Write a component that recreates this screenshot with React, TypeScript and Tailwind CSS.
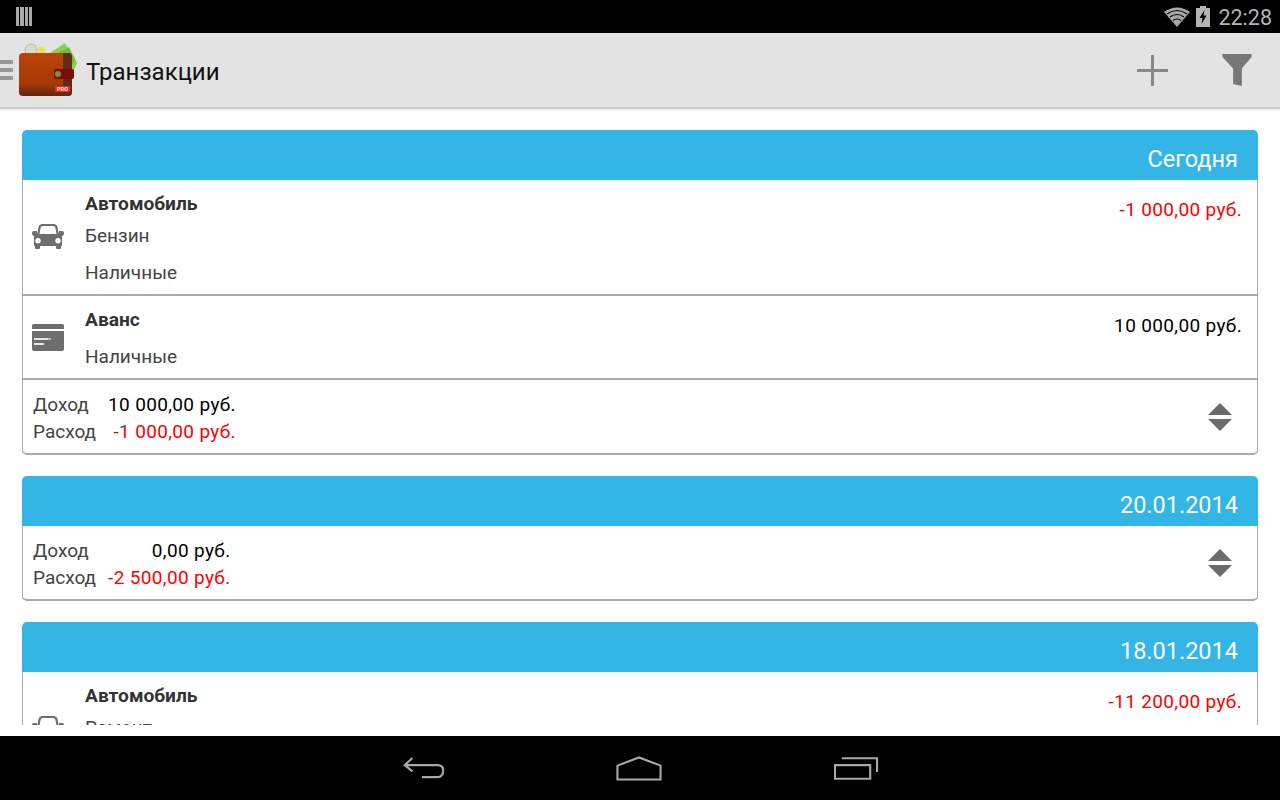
function CarIcon() {
  return (
    <svg width="32" height="26" viewBox="0 0 32 26" className="block">
      <path d="M6 12 L7.500 3.500 Q8 1 11 1 H21 Q24 1 24.500 3.500 L26 12" fill="none" stroke="#6e6e6e" strokeWidth="2.200" />
      <path d="M0 9 Q0 7 2 7 H5 V12 H2 Q0 12 0 9 Z M32 9 Q32 7 30 7 H27 V12 H30 Q32 12 32 9 Z" fill="#6e6e6e" />
      <path fillRule="evenodd" d="M5 10 H27 Q30 10 30 13 V21 Q30 22 29 22 V24 Q29 25 28 25 H25 Q24 25 24 24 V22 H8 V24 Q8 25 7 25 H4 Q3 25 3 24 V22 Q2 22 2 21 V13 Q2 10 5 10 Z M6 14 A2.700 2.700 0 1 0 6.010 19.400 A2.700 2.700 0 1 0 6 14 Z M26 14 A2.700 2.700 0 1 0 26.010 19.400 A2.700 2.700 0 1 0 26 14 Z" fill="#6e6e6e" />
    </svg>
  )
}

function CardIcon() {
  return (
    <svg width="32" height="27" viewBox="0 0 32 27" className="block">
      <path d="M2 0 H30 Q32 0 32 2 V5 H0 V2 Q0 0 2 0 Z" fill="#6e6e6e" />
      <path d="M0 7 H32 V25 Q32 27 30 27 H2 Q0 27 0 25 Z" fill="#6e6e6e" />
      <rect x="2" y="14" width="14" height="2" fill="#e4e4e4" />
      <rect x="16" y="14" width="3" height="2" fill="#bbbbbb" />
      <rect x="2" y="19" width="10" height="2" fill="#e4e4e4" />
    </svg>
  )
}

function UpDownIcon() {
  return (
    <svg width="24" height="28" viewBox="0 0 24 28" className="block">
      <path d="M12 0 L24 12 H0 Z" fill="#6b6b6b" />
      <path d="M0 16 H24 L12 28 Z" fill="#6b6b6b" />
    </svg>
  )
}

function WalletLogo() {
  return (
    <svg width="58" height="54" viewBox="0 0 58 54" className="block">
      <defs>
        <linearGradient id="walletBody" x1="0" y1="0" x2="0" y2="1">
          <stop offset="0" stopColor="#b8440a" />
          <stop offset="0.7" stopColor="#a83a06" />
          <stop offset="1" stopColor="#642610" />
        </linearGradient>
      </defs>
      <path d="M28 12 L46 0 L58 20 L54 30 Z" fill="#8fd14f" />
      <path d="M34 12 L50 4 L57 18 L50 24 Z" fill="#6fbf3a" />
      <circle cx="12" cy="7" r="6" fill="#d8dcc8" stroke="#b8bca8" />
      <circle cx="22" cy="8" r="4.500" fill="#e8e060" />
      <rect x="0" y="10" width="53" height="43" rx="4" fill="url(#walletBody)" />
      <path d="M44 10 H49 Q53 10 53 14 V49 Q53 53 49 53 H44 Z" fill="#5f2c12" />
      <rect x="35" y="26" width="20" height="10" rx="2" fill="#7a0d0a" />
      <circle cx="39" cy="31" r="3" fill="#8c8f3a" />
      <rect x="36" y="43" width="15" height="6" rx="1" fill="#f5202c" />
      <text x="43.500" y="48" fontSize="5.500" fontWeight="700" textAnchor="middle" fill="#ffffff" fontFamily="Roboto, sans-serif">PRO</text>
    </svg>
  )
}

function Row({ title, sub, amount, red, icon }: { title: string; sub?: string; amount: string; red?: boolean; icon: React.ReactNode }) {
  return (
    <div className="flex items-center border-b-2 border-[#aaaaaa]">
      <div className="w-[62px] pl-[9px] shrink-0">{icon}</div>
      <div className="flex-1 pt-3 pb-[9px] text-[19px] leading-[24px] text-[#444444]">
        <div className="font-bold text-[#333333] text-[19.2px]">{title}</div>
        {sub && <div className="mt-2">{sub}</div>}
        <div className="mt-[13px]">Наличные</div>
      </div>
      <div className={`self-start mt-[18px] pr-[15px] text-[19px] tracking-[0.35px] leading-[24px] ${red ? 'text-[#ff0000]' : 'text-black'}`}>{amount}</div>
    </div>
  )
}

function Summary({ income, expense }: { income: string; expense: string }) {
  return (
    <div className="h-[73px] flex items-center justify-between pl-[10px] pr-[25px]">
      <div className="grid grid-cols-[auto_auto] gap-x-3 text-[19px] leading-[27px] w-fit pt-[2px]">
        <span className="text-[#444444]">Доход</span>
        <span className="text-right text-black tracking-[0.35px]">{income}</span>
        <span className="text-[#444444]">Расход</span>
        <span className="text-right text-[#ff0000] tracking-[0.35px]">{expense}</span>
      </div>
      <UpDownIcon />
    </div>
  )
}

function DayCard({ date, children }: { date: string; children: React.ReactNode }) {
  return (
    <div className="mb-[21px]">
      <div className="h-[50px] bg-[#33b5e5] rounded-t-[5px] flex items-center justify-end pt-[10px] pr-5 text-[23.5px] text-white">{date}</div>
      <div className="border-x-[1.5px] border-b-2 border-[#aaaaaa] rounded-b-[5px] bg-white">{children}</div>
    </div>
  )
}

export default function App() {
  return (
    <div className="w-[1280px] h-[800px] flex flex-col overflow-hidden bg-white font-['Roboto',sans-serif]">

      {/* status bar */}
      <div className="h-[33px] bg-black flex items-center justify-between pl-4 pr-2 shrink-0">
        <div className="flex gap-[1px] w-4 h-[19px]">
          {[1,2,3,4].map(i => <div key={i} className="flex-1 bg-[#a8a8a8]" />)}
        </div>
        <div className="flex items-center">
          <svg width="26" height="20" viewBox="0 0 26 20">
            <path d="M13 20 L0 5 Q13 -4 26 5 Z" fill="#a8a8a8" />
            <path d="M3 7 Q13 0 23 7 M6 10 Q13 5 20 10 M9 13.500 Q13 10.500 17 13.500" fill="none" stroke="#000" strokeWidth="1.200" />
          </svg>
          <svg width="14" height="21" viewBox="0 0 14 21" className="ml-[6px]">
            <path d="M4 0 H10 V2 H14 V21 H0 V2 H4 Z" fill="#b4b4b4" />
            <path d="M8.500 4 L3.500 12 H6.500 L5.500 18 L10.500 9.500 H7.500 Z" fill="#000" />
          </svg>
          <span className="ml-2 pt-[2px] text-[21.5px] leading-none text-[#b4b4b4]">22:28</span>
        </div>
      </div>

      {/* action bar */}
      <div className="h-[76px] bg-[#e3e3e3] border-b-2 border-[#cdcdcd] shadow-[0_1px_2px_rgba(0,0,0,0.12)] flex items-center shrink-0 z-10">
        <div className="w-[13px] flex flex-col gap-[4px] shrink-0">
          <div className="h-[4px] bg-[#999999]" />
          <div className="h-[4px] bg-[#999999]" />
          <div className="h-[4px] bg-[#999999]" />
        </div>
        <div className="ml-[6px] mb-[1px]"><WalletLogo /></div>
        <h1 className="ml-[9px] pt-1 text-[24px] text-[#111111] flex-1">Транзакции</h1>
        <svg width="31" height="31" viewBox="0 0 31 31" className="mr-[54px] mt-[1px]">
          <path d="M15.500 0 V31 M0 15.500 H31" stroke="#888888" strokeWidth="3" />
        </svg>
        <svg width="30" height="32" viewBox="0 0 30 33" className="mr-[28px]">
          <path d="M0 0 H30 V3 L20 15 V33 L11 31 V15 L0 3 Z" fill="#777777" />
        </svg>
      </div>

      {/* list */}
      <div className="flex-1 pb-[11px] bg-white min-h-0">
        <div className="h-full overflow-hidden px-[22px] pt-[21px]">
          <DayCard date="Сегодня">
            <Row title="Автомобиль" sub="Бензин" amount="-1 000,00 руб." red icon={<CarIcon />} />
            <Row title="Аванс" amount="10 000,00 руб." icon={<CardIcon />} />
            <Summary income="10 000,00 руб." expense="-1 000,00 руб." />
          </DayCard>
          <DayCard date="20.01.2014">
            <Summary income="0,00 руб." expense="-2 500,00 руб." />
          </DayCard>
          <DayCard date="18.01.2014">
            <Row title="Автомобиль" sub="Ремонт" amount="-11 200,00 руб." red icon={<CarIcon />} />
          </DayCard>
        </div>
      </div>

      {/* nav bar */}
      <div className="h-[64px] bg-black flex items-center justify-center shrink-0">
        <svg width="43" height="24" viewBox="0 0 43 25">
          <path d="M10 2 L2 9.500 L10 16 M2 9.500 H36 Q42 9.500 42 15 Q42 22 36 22 H20" fill="none" stroke="#a8a8a8" strokeWidth="2.200" />
        </svg>
        <svg width="46" height="25" viewBox="0 0 48 26" className="ml-[171px]">
          <path d="M1.500 10 L24 1.500 L46.500 10 V24.500 H1.500 Z" fill="none" stroke="#a8a8a8" strokeWidth="2.200" />
        </svg>
        <svg width="45" height="24" viewBox="0 0 46 24" className="ml-[172px]">
          <path d="M1 9 H37 V23 H1 Z" fill="none" stroke="#a8a8a8" strokeWidth="2.200" />
          <path d="M8 2 H44 V16" fill="none" stroke="#a8a8a8" strokeWidth="2.200" />
        </svg>
      </div>
    </div>
  )
}
